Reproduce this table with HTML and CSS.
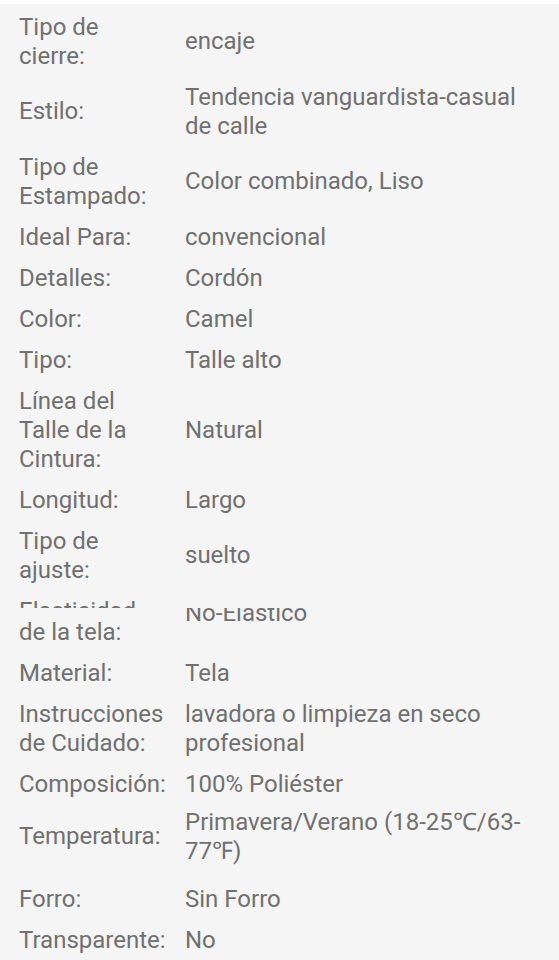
FILE: index.html
```html
<!DOCTYPE html>
<html lang="es">
<head>
<meta charset="utf-8">
<title>Especificaciones</title>
<link rel="stylesheet" href="styles.css">
</head>
<body>
<div class="topbar"></div>
<dl class="specs">
  <div class="row"><dt>Tipo de<br>cierre:</dt><dd>encaje</dd></div>
  <div class="row"><dt>Estilo:</dt><dd>Tendencia vanguardista-casual de calle</dd></div>
  <div class="row"><dt>Tipo de<br>Estampado:</dt><dd>Color combinado, Liso</dd></div>
  <div class="row"><dt>Ideal Para:</dt><dd>convencional</dd></div>
  <div class="row"><dt>Detalles:</dt><dd>Cordón</dd></div>
  <div class="row"><dt>Color:</dt><dd>Camel</dd></div>
  <div class="row"><dt>Tipo:</dt><dd>Talle alto</dd></div>
  <div class="row"><dt>Línea del<br>Talle de la<br>Cintura:</dt><dd>Natural</dd></div>
  <div class="row"><dt>Longitud:</dt><dd>Largo</dd></div>
  <div class="row"><dt>Tipo de<br>ajuste:</dt><dd>suelto</dd></div>
  <div class="row row-cut">
    <dt><span class="cut-line"><span>Elasticidad</span></span><span class="cut-rest">de la tela:</span></dt>
    <dd><span class="cut-value"><span>No-Elastico</span></span></dd>
  </div>
  <div class="row"><dt>Material:</dt><dd>Tela</dd></div>
  <div class="row"><dt>Instrucciones<br>de Cuidado:</dt><dd>lavadora o limpieza en seco profesional</dd></div>
  <div class="row"><dt>Composición:</dt><dd>100% Poliéster</dd></div>
  <div class="row row-temp"><dt>Temperatura:</dt><dd>Primavera/Verano (18-25℃/63-77℉)</dd></div>
  <div class="row"><dt>Forro:</dt><dd>Sin Forro</dd></div>
  <div class="row"><dt>Transparente:</dt><dd>No</dd></div>
</dl>
</body>
</html>
```
FILE: styles.css
```css
html, body {
  margin: 0;
  padding: 0;
  background: #f5f5f5;
}
body {
  font-family: Roboto, "Liberation Sans", sans-serif;
  font-size: 24px;
  line-height: 29px;
  color: #707070;
}
.topbar {
  height: 4px;
  background: #ffffff;
}
.specs {
  margin: 0;
  padding: 2.5px 0 0 0;
}
.row {
  display: grid;
  grid-template-columns: 152px 355px;
  column-gap: 14px;
  align-items: center;
  padding: 6px 19px;
}
.row dt, .row dd {
  margin: 0;
}
.row-temp {
  padding-top: 3px;
  padding-bottom: 13px;
}
.row-cut {
  align-items: start;
}
.row-cut dt {
  display: flex;
  flex-direction: column;
}
.cut-line {
  display: block;
  height: 11.5px;
  overflow: hidden;
  margin-bottom: 9.5px;
}
.cut-line span, .cut-rest {
  display: block;
}
.cut-value {
  display: block;
  margin-top: 11.5px;
  height: 20.3px;
  overflow: hidden;
}
.cut-value span {
  display: block;
  margin-top: -8.7px;
}
```
